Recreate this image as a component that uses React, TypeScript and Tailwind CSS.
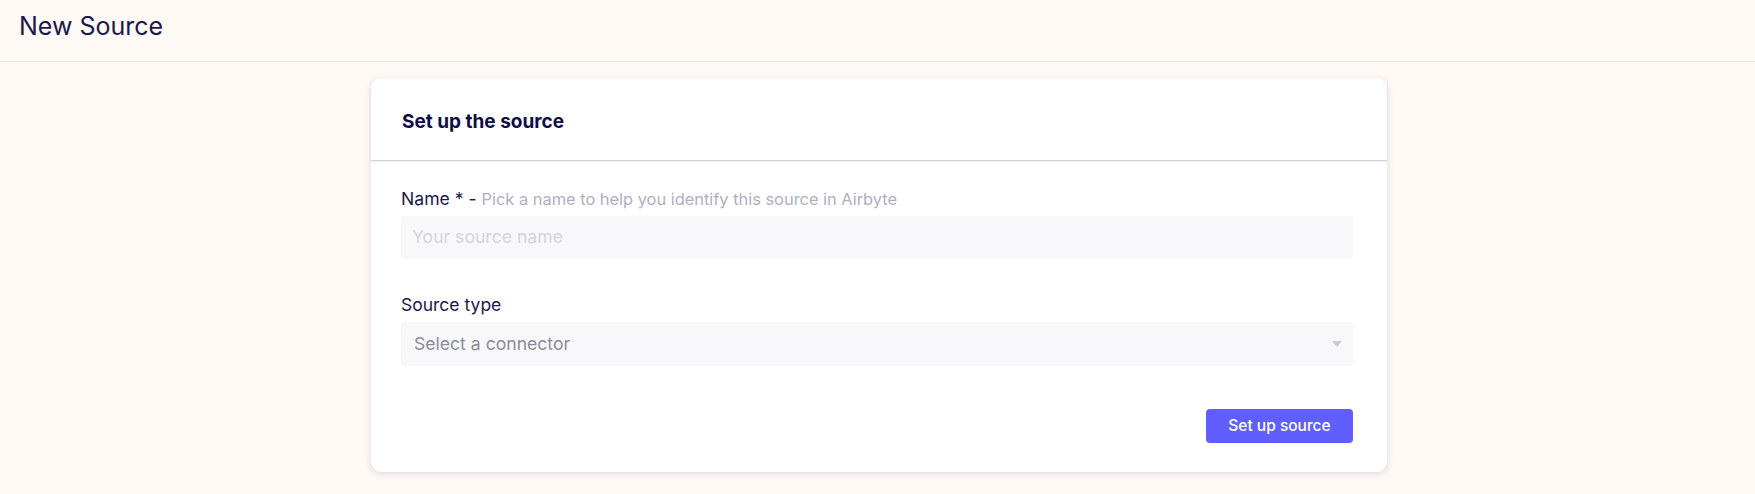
import React from "react";

export default function App() {
  return (
    <div
      className="min-h-[494px] bg-[#fef9f4] text-[#1a194d]"
      style={{ fontFamily: "Inter, 'Noto Sans', sans-serif" }}
    >
      <header className="h-[62px] border-b border-[#ebe7e2] pl-[19px] flex items-center pb-[9px]">
        <h1 className="text-[25px] leading-none font-normal text-[#1a194d]">New Source</h1>
      </header>

      <main className="pt-[16px] pb-[22px] pl-[3px]">
        <div className="mx-auto w-[1016px] rounded-[11px] bg-white shadow-[0_2px_7px_rgba(26,25,77,0.13)]">
          <div className="h-[83px] px-[31px] flex items-center pt-[6px] border-b border-[#d2d2da] shadow-[0_1px_2px_rgba(26,25,77,0.08)]">
            <h2 className="text-[19px] font-bold text-[#100e45]">Set up the source</h2>
          </div>

          <div className="pl-[30px] pr-[34px] pt-[26px] pb-[29px]">
            <label className="block text-[17.6px] leading-[24px] mb-[5px] whitespace-nowrap">
              <span className="text-[#1a194d]">Name * - </span>
              <span className="text-[16.4px] text-[#afafc1]">
                Pick a name to help you identify this source in Airbyte
              </span>
            </label>
            <div className="h-[43px] rounded-[4px] bg-[#f8f8fa] flex items-center pl-[11px] pr-[10px]">
              <input
                className="w-full bg-transparent outline-none text-[17.6px] text-[#1a194d] placeholder:text-[#d4d4dc]"
                placeholder="Your source name"
              />
            </div>

            <label className="block mt-[34px] text-[17.5px] leading-[24px] mb-[5px] text-[#1a194d]">
              Source type
            </label>
            <div className="h-[44px] rounded-[4px] bg-[#f8f8fa] flex items-center justify-between pl-[13px] pr-[11px]">
              <span className="text-[17.6px] text-[#8b8b9c]">Select a connector</span>
              <svg width="10" height="6" viewBox="0 0 10 6">
                <path d="M0 0h10L5 6z" fill="#cbcbd4" />
              </svg>
            </div>

            <div className="flex justify-end mt-[43px]">
              <button className="h-[34px] w-[147px] rounded-[4px] bg-[#615eff] text-white text-[15.5px] font-medium">
                Set up source
              </button>
            </div>
          </div>
        </div>
      </main>
    </div>
  );
}
